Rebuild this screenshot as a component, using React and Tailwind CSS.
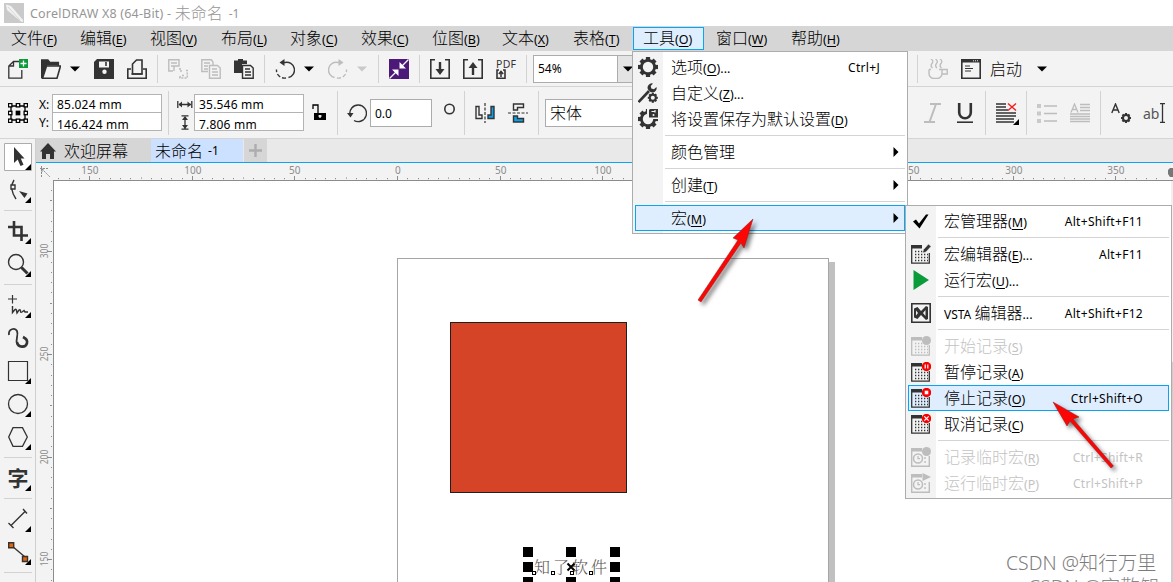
import React from 'react';
import clsx from 'clsx';

const INK = '#333333';
const DIM = '#bdbdbd';

const menus = [
  { label: '文件', k: 'F', w: 'w-[69px]' },
  { label: '编辑', k: 'E', w: 'w-[70px]' },
  { label: '视图', k: 'V', w: 'w-[71px]' },
  { label: '布局', k: 'L', w: 'w-[69px]' },
  { label: '对象', k: 'C', w: 'w-[71px]' },
  { label: '效果', k: 'C', w: 'w-[71px]' },
  { label: '位图', k: 'B', w: 'w-[70px]' },
  { label: '文本', k: 'X', w: 'w-[71px]' },
  { label: '表格', k: 'T', w: 'w-[71px]' },
  { label: '工具', k: 'O', w: 'w-[71px]', open: true },
  { label: '窗口', k: 'W', w: 'w-[75px]' },
  { label: '帮助', k: 'H', w: 'w-[75px]' },
];

const toolsMenu = [
  { label: '选项', k: 'O', dots: true, shortcut: 'Ctrl+J', icon: 'gear' },
  { label: '自定义', k: 'Z', dots: true, icon: 'wrench' },
  { label: '将设置保存为默认设置', k: 'D', icon: 'gearSave' },
  null,
  { label: '颜色管理', sub: true },
  null,
  { label: '创建', k: 'T', sub: true },
  null,
  { label: '宏', k: 'M', sub: true, active: true },
];

const macroMenu = [
  { label: '宏管理器', k: 'M', shortcut: 'Alt+Shift+F11', icon: 'check' },
  null,
  { label: '宏编辑器', k: 'E', dots: true, shortcut: 'Alt+F11', icon: 'edit' },
  { label: '运行宏', k: 'U', dots: true, icon: 'play' },
  null,
  { pre: 'VSTA ', label: '编辑器', dots: true, shortcut: 'Alt+Shift+F12', icon: 'vsta' },
  null,
  { label: '开始记录', k: 'S', disabled: true, icon: 'recStart' },
  { label: '暂停记录', k: 'A', icon: 'recPause' },
  { label: '停止记录', k: 'O', shortcut: 'Ctrl+Shift+O', icon: 'recStop', active: true },
  { label: '取消记录', k: 'C', icon: 'recCancel' },
  null,
  { label: '记录临时宏', k: 'R', shortcut: 'Ctrl+Shift+R', disabled: true, icon: 'tmpRec' },
  { label: '运行临时宏', k: 'P', shortcut: 'Ctrl+Shift+P', disabled: true, icon: 'tmpRun' },
];

const Label = ({ pre, label, k, dots }) => (
  <span className="whitespace-nowrap text-[16px] font-light leading-5">
    {pre && <span className="text-[12px] font-normal">{pre}</span>}
    {label}
    <span className="text-[12.500px] font-normal">
      {k && <>(<span className="underline underline-offset-2">{k}</span>)</>}
      {dots && '...'}
    </span>
  </span>
);

const Ico = ({ className, w = 20, h = 20, children }) => (
  <svg className={clsx('shrink-0', className)} width={w} height={h} viewBox={`0 0 ${w} ${h}`} fill="none" stroke={INK} strokeWidth="1.6">
    {children}
  </svg>
);

const Caret = ({ className, color = '#000' }) => (
  <Ico className={className} w={10} h={6}>
    <path d="M0 0.5h10L5 5.5z" fill={color} stroke="none" />
  </Ico>
);

const Sep = ({ className }) => <div className={clsx('w-px shrink-0 bg-[#d2d2d2]', className)} />;

const GearShape = ({ cx, cy, r, hole, color = INK }) => (
  <g stroke={color}>
    {[0, 45, 90, 135].map((a) => (
      <path key={a} d={`M${cx - r} ${cy}H${cx + r}`} strokeWidth={r * 0.42} transform={`rotate(${a} ${cx} ${cy})`} />
    ))}
    <circle cx={cx} cy={cy} r={r * 0.8} fill={color} stroke="none" />
    <circle cx={cx} cy={cy} r={hole} fill="#f3f3f3" stroke="none" />
  </g>
);

const MacroGrid = ({ color = INK, children }) => (
  <>
    <path d="M0 1h11v3.500H0z" fill={color} stroke="none" />
    <path d="M0.700 4v15.200H18.300V9" stroke={color} strokeWidth="1.300" />
    <path d="M4 7.500h10M4 10.500h13M4 13.500h13M4 16.500h13" stroke={color} strokeWidth="1.300" strokeDasharray="1.300 1.700" />
    {children}
  </>
);

const TempGrid = ({ children }) => (
  <>
    <path d="M0 1h11v3.500H0z" fill={DIM} stroke="none" />
    <path d="M0.700 4v15.200H18.300V9M14 10v2M14 14v2" stroke={DIM} strokeWidth="1.400" />
    <circle cx="7" cy="11.500" r="4.500" stroke={DIM} strokeWidth="1.500" />
    <path d="M7 9v2.700h2" stroke={DIM} strokeWidth="1.200" />
    {children}
  </>
);

const RedDot = ({ children }) => (
  <>
    <circle cx="15.500" cy="4.500" r="4.700" fill="#f80000" stroke="none" />
    <g stroke="#fff" strokeWidth="1.200">{children}</g>
  </>
);

const menuIcons = {
  gear: <GearShape cx={10} cy={10} r={10} hole={5.2} />,
  wrench: (
    <>
      <path d="M0.500 19 11 8" strokeWidth="2.600" />
      <path d="M15 0.500a4.300 4.300 0 0 0-5 6l2.500 2.500a4.300 4.300 0 0 0 6-5l-2.600 2.200-2.600-.8-.6-2.500z" fill={INK} stroke="none" />
      <GearShape cx={14.8} cy={14.800} r={5} hole={2} />
    </>
  ),
  gearSave: (
    <>
      <GearShape cx={10} cy={10} r={10} hole={5.2} />
      <path d="M9 -1h12v11H9z" fill="#f3f3f3" stroke="none" />
      <path d="M12 0h8v8.500h-9V1z" fill={INK} stroke="none" />
      <path d="M13.500 2.500h4M17 1v2.500" stroke="#f3f3f3" strokeWidth="1.200" />
      <circle cx="15.500" cy="6" r="1" fill="#f3f3f3" stroke="none" />
    </>
  ),
  check: <path d="M2 10.500 5 8.500l3 4L15 3.500h2.500L8.500 17.500z" fill="#000" stroke="none" />,
  edit: (
    <MacroGrid>
      <path d="m11.500 9 1-3.500 5-5.500 2.500 2.500-5 5.500z" fill={INK} stroke="#f3f3f3" strokeWidth="0.600" />
    </MacroGrid>
  ),
  play: <path d="M2.500 0 18 10 2.500 20z" fill="#0a9b3b" stroke="none" />,
  vsta: (
    <>
      <path d="M0.800 0.800h18.400v18.400H0.800z" />
      <path d="m3 5.500 3.500-1.500 3.500 4 5-5 2 1v12l-2 1-5-5-3.500 4L3 14.500z" fill={INK} stroke="none" />
      <path d="M5 7.500v5l2-2.500zM14.500 7v6L12 10z" fill="#f3f3f3" stroke="none" />
    </>
  ),
  recStart: (
    <MacroGrid color={DIM}>
      <circle cx="15.500" cy="4.500" r="4.500" fill={DIM} stroke="none" />
    </MacroGrid>
  ),
  recPause: <MacroGrid><RedDot><path d="M14.200 2.500v4M16.800 2.500v4" /></RedDot></MacroGrid>,
  recStop: <MacroGrid><RedDot><path d="M13.700 2.700h3.600v3.600h-3.600z" fill="#fff" stroke="none" /></RedDot></MacroGrid>,
  recCancel: <MacroGrid><RedDot><path d="m13.300 2.300 4.400 4.400M17.700 2.300l-4.400 4.400" /></RedDot></MacroGrid>,
  tmpRec: <TempGrid><circle cx="15.500" cy="4.500" r="4.500" fill={DIM} stroke="none" /></TempGrid>,
  tmpRun: <TempGrid><path d="m11.500 0 8.500 4-8.500 4z" fill={DIM} stroke="none" /></TempGrid>,
};

const MenuPanel = ({ items, className, textPad, shortcutPad }) => (
  <div className={clsx('absolute border border-[#acacac] bg-[linear-gradient(90deg,#f3f3f3_30px,#fff_30px)] px-0.5 py-0.5', className)}>
    {items.map((item, i) =>
      item === null ? (
        <div key={i} className="flex h-[7px] items-center pl-[30px]">
          <div className="h-px w-full bg-[#d4d4d4]" />
        </div>
      ) : (
        <div
          key={i}
          className={clsx(
            'flex h-[26px] items-center border',
            item.active ? 'border-[#0aa5f2] bg-[#dfeeff]' : 'border-transparent',
            item.disabled ? 'text-[#c3c3c3]' : 'text-black'
          )}
        >
          <Ico className="ml-[2px]">{item.icon && menuIcons[item.icon]}</Ico>
          <span className={clsx('flex-1 pb-px', textPad)}><Label {...item} /></span>
          {item.shortcut && <span className={clsx('pt-px text-[12px] tracking-[0.3px]', shortcutPad)}>{item.shortcut}</span>}
          {item.sub && (
            <Ico className="mr-[5px]" w={6} h={10}>
              <path d="M0.500 0 5.500 5l-5 5z" fill="#000" stroke="none" />
            </Ico>
          )}
        </div>
      )
    )}
  </div>
);

const TitleBar = () => (
  <div className="flex h-[26px] items-center bg-white text-[#969696]">
    <Ico className="ml-1">
      <path d="M0 0h20v20H0z" fill="#cacaca" stroke="none" />
      <path d="M2 1.500 7 3l12 14v2l-2-.5L3 7z" fill="#f2f2f2" stroke="none" />
      <path d="M4 4 16 17" stroke="#d8d8d8" strokeWidth="1" />
    </Ico>
    <span className="ml-1.5 whitespace-pre pt-0.5 text-[12.500px] tracking-[0.2px]">CorelDRAW X8 (64-Bit) - </span>
    <span className="text-[16px] font-light">未命名</span>
    <span className="ml-1.5 pt-px text-[12px]">-1</span>
  </div>
);

const MenuBar = () => (
  <div className="flex h-[25px] items-center bg-[#d6d6d6]">
    {menus.map((m) => (
      <div
        key={m.label}
        className={clsx(
          m.w,
          'flex h-[23px] shrink-0 items-center border',
          m.open ? 'border-[#0aa5f2] bg-[#dfeeff] pl-[9px]' : 'border-transparent pl-2.5',
          m.label === '窗口' && 'ml-px'
        )}
      >
        <Label {...m} />
      </div>
    ))}
  </div>
);

const StandardBar = () => (
  <div className="flex h-9 items-center border-b border-[#d4d4d4] bg-[#f3f3f3]">
    <Ico className="ml-2">
      <path d="M11 2.500H5.500L0.800 7v12.200h13V11M5.500 2.500V7H1" strokeWidth="1.300" />
      <path d="M11 0h9v9h-9z" fill="#0a9b3b" stroke="none" />
      <path d="M15.500 1.500v6M12.500 4.500h6" stroke="#fff" strokeWidth="1.300" />
    </Ico>
    <Ico className="ml-[13px]">
      <path d="M0.800 19V1h6l2 2.500h8.500V7" />
      <path d="M0.800 19V1h6l2 2.500H17v3H6L1.500 19z" fill={INK} stroke="none" />
      <path d="M5.500 7h14L16 19.200H1.500z" fill="#f3f3f3" />
    </Ico>
    <Caret className="ml-[9px]" />
    <Ico className="ml-3.5">
      <path d="M3 0h17v20H0V3z" fill={INK} stroke="none" />
      <path d="M5 2.500h10v6H5z" fill="#f3f3f3" stroke="none" />
      <path d="M12 3v4" />
      <circle cx="10.500" cy="12.700" r="2.200" fill="#f3f3f3" stroke="none" />
    </Ico>
    <Ico className="ml-[13px]">
      <path d="M5.500 15V5l4-4h5.500v14z" />
      <path d="M4 10H0.800v9.200h18.400V10H16M4.500 15h11" />
    </Ico>
    <Sep className="ml-2.5 h-7" />
    <Ico className="ml-2.5">
      <g stroke={DIM}>
        <path d="M5 12H0.800V0.800H11V7H6v5M3 4h6M3 7h3" strokeWidth="1.400" />
        <path d="M12 12h3M18 11.500h1.300V19H12v-3M14 16.500h3M12 9v2" strokeDasharray="2 1.200" />
      </g>
    </Ico>
    <Ico className="ml-[13px]">
      <g stroke={DIM} strokeWidth="1.400">
        <path d="M7 12.500H0.800V0.800h9.500L12 3v3M3 4h6M3 7h4M3 10h4" />
        <path d="M8.500 6.500h8l2.700 2.500v10.200H8.500zM11 10h5M11 13h6M11 16h6" />
      </g>
    </Ico>
    <Ico className="ml-[13px]">
      <path d="M0 1.500h4V0h5v1.500h4V5H8v9H0z" fill={INK} stroke="none" />
      <path d="M8.500 6.500h8l2.700 2.500v10.200H8.500zM11 10h5M11 13h6M11 16h6" strokeWidth="1.400" />
    </Ico>
    <Sep className="ml-2.5 h-7" />
    <Ico className="ml-2.5">
      <path d="M8 3.500h2A7.500 7.500 0 0 1 13.500 18.500" strokeWidth="1.400" />
      <path d="M11 19a8 8 0 0 1-9.500-8.500" strokeDasharray="4 2" strokeWidth="1.400" />
      <path d="M9.500 0v7L4.500 3.500z" fill={INK} stroke="none" />
    </Ico>
    <Caret className="ml-[9px]" />
    <Ico className="ml-3.5">
      <g stroke={DIM} strokeWidth="1.400">
        <path d="M12 3.500h-2A7.500 7.500 0 0 0 6.500 18.500" />
        <path d="M9 19a8 8 0 0 0 9.500-8.500" strokeDasharray="4 2" />
        <path d="M10.500 0v7l5-3.500z" fill={DIM} stroke="none" />
      </g>
    </Ico>
    <Caret className="ml-[9px]" color="#c9c9c9" />
    <Sep className="ml-[11px] h-7" />
    <Ico className="ml-2.5">
      <path d="M0 0h20v20H0z" fill="#4d1979" stroke="none" />
      <g stroke="#fff" fill="#fff" strokeWidth="1.300">
        <path d="M19.500 0.500 12 8M0.500 19.500 8 12" />
        <path d="M10.500 3v6.500H17zM3 10.500h6.500V17z" stroke="none" />
      </g>
    </Ico>
    <Sep className="ml-2.5 h-7" />
    <Ico className="ml-2.5">
      <path d="M5 0.800H0.800v18.400h18.400V0.800H15" />
      <path d="M10 3v8" strokeWidth="2.400" />
      <path d="M5.500 10h9L10 16z" fill={INK} stroke="none" />
    </Ico>
    <Ico className="ml-[13px]">
      <path d="M5 0.800H0.800v18.400h18.400V0.800H15" />
      <path d="M10 16V8" strokeWidth="2.400" />
      <path d="M5.500 9h9L10 3z" fill={INK} stroke="none" />
    </Ico>
    <div className="ml-[13px] flex w-[22px] flex-col pt-px text-[10.500px] leading-[10px] tracking-[0.3px] text-[#333]">
      PDF
      <Ico w={10} h={10}>
        <path d="M3 1H1v8.200h8V1H7" />
        <path d="M5 8V3M2.800 5 5 2.500 7.200 5" strokeWidth="1.500" />
      </Ico>
    </div>
    <Sep className="ml-2 h-7" />
    <div className="ml-1.5 flex h-7 w-[105px] shrink-0 border border-[#acacac] bg-white text-[12px]">
      <span className="flex-1 self-center pl-1 pt-px">54%</span>
      <div className="flex w-5 items-center justify-center border-l border-[#acacac] bg-[#e4e4e4]"><Caret /></div>
    </div>
    <Sep className="ml-[279px] h-7" />
    <Ico className="ml-2.5">
      <g stroke={DIM}>
        <path d="M1 10.500v4a5 5 0 0 0 5 5h3a5 5 0 0 0 5-5v-4h5.200v4.500h-5.500M1 10.500h2M11 10.500h3" strokeWidth="1.400" />
        <path d="M3 0q3 2 1 4.500T4.500 9M7.500 0q3 2 1 4.500T9 9M12 0q3 2 1 4.500T13.500 9" strokeWidth="1.300" />
      </g>
    </Ico>
    <Ico className="ml-[13px]">
      <path d="M0.800 0.800h18.400v18.400H0.800z" />
      <path d="M0 0h20v3.500H0z" fill={INK} stroke="none" />
      <path d="M12 1.800h6" stroke="#eee" strokeWidth="1" strokeDasharray="1 1" />
      <path d="M4 7h5M4 9.500h8M4 12h6" strokeWidth="1.200" />
    </Ico>
    <span className="ml-[9px] w-8 shrink-0 whitespace-nowrap text-[16px] font-light">启动</span>
    <Caret className="ml-[15px]" />
  </div>
);

const SizePair = ({ className, a, b }) => (
  <div className={clsx('flex h-[37px] w-[110px] shrink-0 flex-col border border-[#b3b3b3] bg-white text-[12px] tracking-[0.2px]', className)}>
    <span className="flex h-[18px] shrink-0 items-center border-b border-[#b3b3b3] pl-1 pt-[3px]">{a}</span>
    <span className="flex flex-1 items-center pl-1 pt-[3px]">{b}</span>
  </div>
);

const PropertyBar = () => (
  <div className="flex h-[52px] items-center border-b border-[#d4d4d4] bg-[#f3f3f3]">
    <Ico className="ml-2">
      <path d="M3 3h14v14H3z" strokeWidth="1.300" stroke="#000" />
      {[2.200, 10, 17.800].map((x) =>
        [2.200, 10, 17.800].map((y) => (
          <rect key={`${x}-${y}`} x={x - 1.700} y={y - 1.700} width="3.400" height="3.400" fill={x === 10 && y === 10 ? '#000' : '#fff'} stroke="#000" strokeWidth="1.300" />
        ))
      )}
    </Ico>
    <div className="ml-[11px] flex w-[13px] flex-col pt-[3px] text-[12px] leading-[18px]">
      <span>X:</span>
      <span>Y:</span>
    </div>
    <SizePair a="85.024 mm" b="146.424 mm" />
    <Sep className="ml-1.5 h-11" />
    <Ico className="ml-2" w={16} h={36}>
      <path d="M0.800 6v7M14.800 6v7M2 9.500h12" strokeWidth="1.300" />
      <path d="M1.500 9.500 5 6.500v6zM14 9.500l-3.500-3v6z" fill={INK} stroke="none" />
      <path d="M4.500 20.800h7M4.500 34.200h7M8 22v12" strokeWidth="1.300" />
      <path d="M8 21l3 4H5zM8 34l3-4H5z" fill={INK} stroke="none" />
    </Ico>
    <SizePair className="ml-px" a="35.546 mm" b="7.806 mm" />
    <Ico className="ml-2" w={15} h={17}>
      <path d="M1 5V1h5v8" stroke="#000" strokeWidth="1.300" />
      <path d="M2 9h12v7H2z" fill="#000" stroke="none" />
      <path d="M8 11v3M6.500 12h3" stroke="#fff" strokeWidth="1.300" />
    </Ico>
    <Sep className="ml-2.5 h-11" />
    <Ico className="ml-[9px]">
      <path d="M3 12A8.300 8.300 0 1 1 7 17.500" strokeWidth="1.400" />
      <path d="M0 10h6.500L3.500 14.500z" fill={INK} stroke="none" />
    </Ico>
    <div className="ml-[3px] flex h-7 w-[62px] shrink-0 items-center border border-[#acacac] bg-white pl-1 pt-0.5 text-[12px]">0.0</div>
    <Ico className="mb-2 ml-3" w={12} h={12}><circle cx="5.500" cy="6" r="4.700" /></Ico>
    <Sep className="ml-2 h-11" />
    <Ico className="ml-2.5">
      <path d="M1 3.500h3V12h3v3.500H1z" strokeWidth="1.400" />
      <path d="M19 3.500h-3V12h-3v3.500h6z" fill="#0aa0ea" strokeWidth="1.400" />
      <path d="M10 0v20" strokeDasharray="3 1.500" strokeWidth="1.200" />
    </Ico>
    <Ico className="ml-[13px]">
      <path d="M5.500 7V1h10v3.500h-6V7z" strokeWidth="1.400" />
      <path d="M5.500 13v6h10v-3.500h-6V13z" fill="#0aa0ea" strokeWidth="1.400" />
      <path d="M0 10h20" strokeDasharray="3 1.500" strokeWidth="1.200" />
    </Ico>
    <Sep className="ml-2.5 h-11" />
    <div className="ml-1.5 flex h-7 w-[120px] shrink-0 items-center border border-[#acacac] bg-white pl-1 text-[16px] font-light">宋体</div>
    <Ico className="ml-[258px]">
      <path d="M7 1h11M1 19h11M13 1 6.500 19" stroke={DIM} strokeWidth="2" />
    </Ico>
    <Ico className="ml-3">
      <path d="M4.200 0v9.500a5.800 5.800 0 0 0 11.600 0V0" strokeWidth="2.600" />
      <path d="M2 19.200h16" />
    </Ico>
    <Sep className="ml-[10px] h-11" />
    <Ico className="ml-2.5" w={24} h={24}>
      <path d="M0 3h10M0 6h10M0 9h12M0 12h20M0 15h20M0 18h18M0 21h18" strokeWidth="1.700" />
      <path d="m12 2.500 8 7M20 2.500l-8 7" stroke="#f02020" strokeWidth="1.500" />
      <path d="M23 18v6h-6z" fill="#000" stroke="none" />
    </Ico>
    <Sep className="ml-1.5 h-11" />
    <Ico className="ml-2.5">
      <path d="M7 3h13M7 10.500h13M7 18h13" stroke={DIM} strokeWidth="1.400" />
      <path d="M0 1h4v4H0zM0 8.500h4v4H0zM0 16h4v4H0z" fill="#c9c9c9" stroke="none" />
    </Ico>
    <Ico className="ml-[13px]">
      <path d="M1 9.500 4.500 1 8 9.500M2 6.500h5" stroke={DIM} strokeWidth="1.300" />
      <path d="M10 1.500h10M10 4.500h10M10 7.500h10M0 11h20M0 13.500h20M0 16h20M0 18.500h20" stroke={DIM} strokeWidth="1.400" />
    </Ico>
    <Sep className="ml-2.5 h-11" />
    <Ico className="ml-2.5">
      <path d="M0.800 10 4.500 1 8.200 10M2 7h5" strokeWidth="1.400" />
      <GearShape cx={15} cy={15} r={5} hole={2} />
    </Ico>
    <span className="ml-[12px] pt-0.5 text-[14px] text-[#555]">ab</span>
    <Ico className="ml-px" w={5} h={20}>
      <path d="M0 0.700h5M0 19.300h5M2.500 1v18" strokeWidth="1.300" />
    </Ico>
  </div>
);

const toolbox = [
  { name: 'pick', fly: true, art: (
    <>
      <path d="M4.500 2.500h27v27h-27z" fill="#fff" stroke="#acacac" strokeWidth="1" />
      <path d="M14 6v16l3.700-3.500L20.500 25l3-1.300L20.800 17.500h3.700z" fill={INK} stroke="none" />
    </>
  ) },
  { name: 'shape', fly: true, art: (
    <>
      <path d="M14 6c-4 6-2 13 2 19" strokeWidth="1.400" />
      <path d="M11 11h4v4h-4z" fill="#f3f3f3" strokeWidth="1.400" />
      <path d="m19 17 8.500 2.500-3 4.500z" fill={INK} stroke="none" />
    </>
  ) },
  null,
  { name: 'crop', fly: true, art: <path d="M8 12h13.500v14M14 6v14.500h14M14 12v8" strokeWidth="2.600" /> },
  { name: 'zoom', fly: true, art: (
    <>
      <circle cx="16" cy="14" r="7.500" strokeWidth="1.400" />
      <path d="m21.500 19.500 6 6" strokeWidth="3" />
    </>
  ) },
  null,
  { name: 'freehand', fly: true, art: (
    <>
      <path d="M12.500 6v8.500M8 10h9" strokeWidth="1.200" />
      <path d="M12.500 17v6.500l2.500-3q1-1 1.500 1l.5 2.500 2-3q1.500-1 1.500 1t1.500 1l2-1.500 1 1.500h3" strokeWidth="1.400" />
    </>
  ) },
  { name: 'artistic', art: (
    <>
      <path d="M9 13C8 7 15 5 17 9s-2 9 0 13" strokeWidth="1.800" />
      <path d="M17 20c1 6 9 6 10 1 .8-4-2-5-4-6" strokeWidth="2.600" />
    </>
  ) },
  { name: 'rect', fly: true, art: <path d="M8.500 6.500h19v19h-19z" strokeWidth="1.200" /> },
  { name: 'ellipse', fly: true, art: <circle cx="18" cy="16" r="9.500" strokeWidth="1.300" /> },
  { name: 'polygon', fly: true, art: <path d="M13 6.700h9.500L27.300 16l-4.800 9.300H13L8.700 16z" strokeWidth="1.300" /> },
  null,
  { name: 'text', fly: true, glyph: '字' },
  null,
  { name: 'dimension', fly: true, art: <path d="M11 22.500 25 8.500M8.500 20l5 5M23 6l4 4.500" strokeWidth="1.400" /> },
  { name: 'connector', fly: true, art: (
    <>
      <path d="m12 10 13 11" strokeWidth="1.400" />
      <path d="M8.700 6.700h5v5h-5zM22.500 20.500h5v5h-5z" fill="#f06000" strokeWidth="1.400" />
    </>
  ) },
  null,
];

const Toolbox = () => (
  <div className="flex w-9 shrink-0 flex-col border-r border-[#cfcfcf] bg-[#f3f3f3] pt-0.5">
    {toolbox.map((t, i) =>
      t === null ? (
        <div key={i} className="ml-1 h-2 w-7 shrink-0 pt-[3px]">
          <div className="h-px bg-[#d2d2d2]" />
        </div>
      ) : (
        <Ico key={t.name} w={35} h={33}>
          {t.art}
          {t.glyph && (
            <text x="7.500" y="24" fontSize="21" fontWeight="700" fill={INK} stroke="none">{t.glyph}</text>
          )}
          {t.fly && <path d="M31 23v6h-6z" fill="#000" stroke="none" />}
        </Ico>
      )
    )}
  </div>
);

const TabBar = () => (
  <div className="flex h-6 border-b border-[#0aa5f2] bg-[#e9e9e9]">
    <div className="flex w-[115px] items-center bg-[#d6d6d6] pl-1">
      <Ico w={16} h={18}>
        <path d="M8 1 0 9.500h2V17h4v-5h4v5h4V9.500h2z" fill={INK} stroke="none" />
      </Ico>
      <span className="ml-2 text-[16px] font-light">欢迎屏幕</span>
    </div>
    <div className="flex w-[92px] items-center bg-[#cce0ff] pl-1 text-[16px] font-light">
      未命名<span className="ml-[5px] text-[12px] font-normal">-1</span>
    </div>
    <div className="ml-px flex w-[23px] items-center justify-center bg-[#d6d6d6]">
      <Ico w={13} h={13}><path d="M6.500 0v13M0 6.500h13" stroke="#adadad" strokeWidth="2.400" /></Ico>
    </div>
  </div>
);

const STEP = 10.26;

const HRuler = () => (
  <svg className="block h-[18px] w-full shrink-0 bg-[#f3f3f3]" fontSize="10" fill="#8c8c8c">
    <path d="M4 5.500h9M5.500 3v12M6 6l8 8M6 9V6h3" stroke="#8c8c8c" strokeWidth="1" strokeDasharray="2 1" fill="none" />
    {Array.from({ length: 108 }, (_, n) => n - 33).map((n) => {
      const x = Math.round(361 + n * STEP);
      if (x < 20) return null;
      const major = n % 10 === 0;
      return (
        <g key={n}>
          <rect x={x} y={major ? 13 : n % 5 === 0 ? 14.500 : 15} width="1" height={major ? 5 : 1.200} />
          {major && <text x={x + 0.8} y="10.500" textAnchor="middle">{Math.abs(n * 5)}</text>}
        </g>
      );
    })}
    <path d="m1132 7 2-2h3v9h-3l-2-3z" fill="#777" />
    <path d="M17 17.500h1120" stroke="#8c8c8c" />
  </svg>
);

const VRuler = () => (
  <svg className="block h-full w-[18px] shrink-0 bg-[#f3f3f3]" fontSize="11" fill="#8c8c8c">
    {Array.from({ length: 45 }, (_, n) => n).map((n) => {
      const y = Math.round(71 + (n - 6) * STEP - 0.6);
      const major = (n - 6) % 10 === 0;
      return (
        <g key={n}>
          <rect x={major ? 11 : n % 5 === 1 ? 14 : 15} y={y} width={major ? 5 : n % 5 === 1 ? 2 : 1} height="1" />
          {major && (
            <text transform={`translate(11.500 ${y}) rotate(-90)`} textAnchor="middle" textLength="14.500" lengthAdjust="spacingAndGlyphs">
              {300 - (n - 6) * 5}
            </text>
          )}
        </g>
      );
    })}
    <path d="M17.500 0v420" stroke="#8c8c8c" />
  </svg>
);

// canvas origin is the inner corner of the two rulers
const Canvas = () => (
  <div className="relative flex-1 overflow-hidden bg-white">
    <div className="absolute left-[775px] top-[81px] h-[340px] w-1.5 bg-[#c0c0c0]" />
    <div className="absolute left-[343px] top-[77px] h-[340px] w-[432px] border border-[#a6a6a6] bg-white" />
    <div className="absolute left-[396px] top-[141px] h-[171px] w-[177px] border border-[#1f1f1f] bg-[#d64427]" />
    <span className="absolute left-[480px] top-[374px] whitespace-nowrap font-['Noto_Serif_CJK_SC','Noto_Sans_CJK_SC',serif] text-[16px] font-light tracking-[3px] text-[#5a5350]">
      知了软件
    </span>
    <svg className="absolute left-[469px] top-[366px]" width="100" height="40">
      <path d="M0 0h10v10H0zM43 0h10v10H43zM87 0h10v10H87zM0 15h10v10H0zM87 15h10v10H87zM0 30h10v10H0zM43 30h10v10H43zM87 30h10v10H87z" fill="#000" />
      <path d="m44.500 16.500 7 7M51.500 16.500l-7 7" stroke="#000" strokeWidth="2" />
      {[9.500, 28.500, 47.500, 66.500].map((x) => (
        <rect key={x} x={x} y="24.500" width="3" height="3" fill="#fff" stroke="#000" />
      ))}
    </svg>
    <div className="absolute right-0 top-0 h-full w-0.5 bg-[linear-gradient(180deg,#f0f0f0_181px,#cdcdcd_181px)]" />
    <div className="absolute left-[952px] top-[369px] whitespace-nowrap text-[19.400px] font-light leading-[26px] text-[#7c7c7c]">CSDN @知行万里</div>
    <div className="absolute left-[974px] top-[393px] whitespace-nowrap text-[19.400px] font-light leading-[26px] text-[#8a8a8a]">CSDN @宾敬知</div>
  </div>
);

const Pointers = () => (
  <svg className="pointer-events-none absolute left-0 top-0 drop-shadow-[3px_3px_2px_rgba(0,0,0,0.5)]" width="1173" height="582" fill="#fc0505" stroke="#8a2020" strokeWidth="0.500">
    <path d="M753 219 733 238l5 2-40 60 3 2 40-59 3 5z" />
    <path d="m1053 402 14 24 3-5 41 47 2.500-2-40.500-47 6-2z" />
  </svg>
);

const App = () => (
  <div className="relative flex h-[582px] w-[1173px] flex-col overflow-hidden bg-white font-['Noto_Sans','Noto_Sans_CJK_SC',sans-serif] text-black">
    <TitleBar />
    <MenuBar />
    <StandardBar />
    <PropertyBar />
    <div className="flex min-h-0 flex-1">
      <Toolbox />
      <div className="flex min-w-0 flex-1 flex-col">
        <TabBar />
        <HRuler />
        <div className="flex min-h-0 flex-1">
          <VRuler />
          <Canvas />
        </div>
      </div>
    </div>
    <MenuPanel items={toolsMenu} className="left-[632px] top-[51px] w-[276px]" textPad="pl-[13px]" shortcutPad="mr-[24px]" />
    <MenuPanel items={macroMenu} className="left-[905px] top-[205px] w-[267px]" textPad="pl-[13px]" shortcutPad="mr-[25px]" />
    <Pointers />
  </div>
);

export default App;
